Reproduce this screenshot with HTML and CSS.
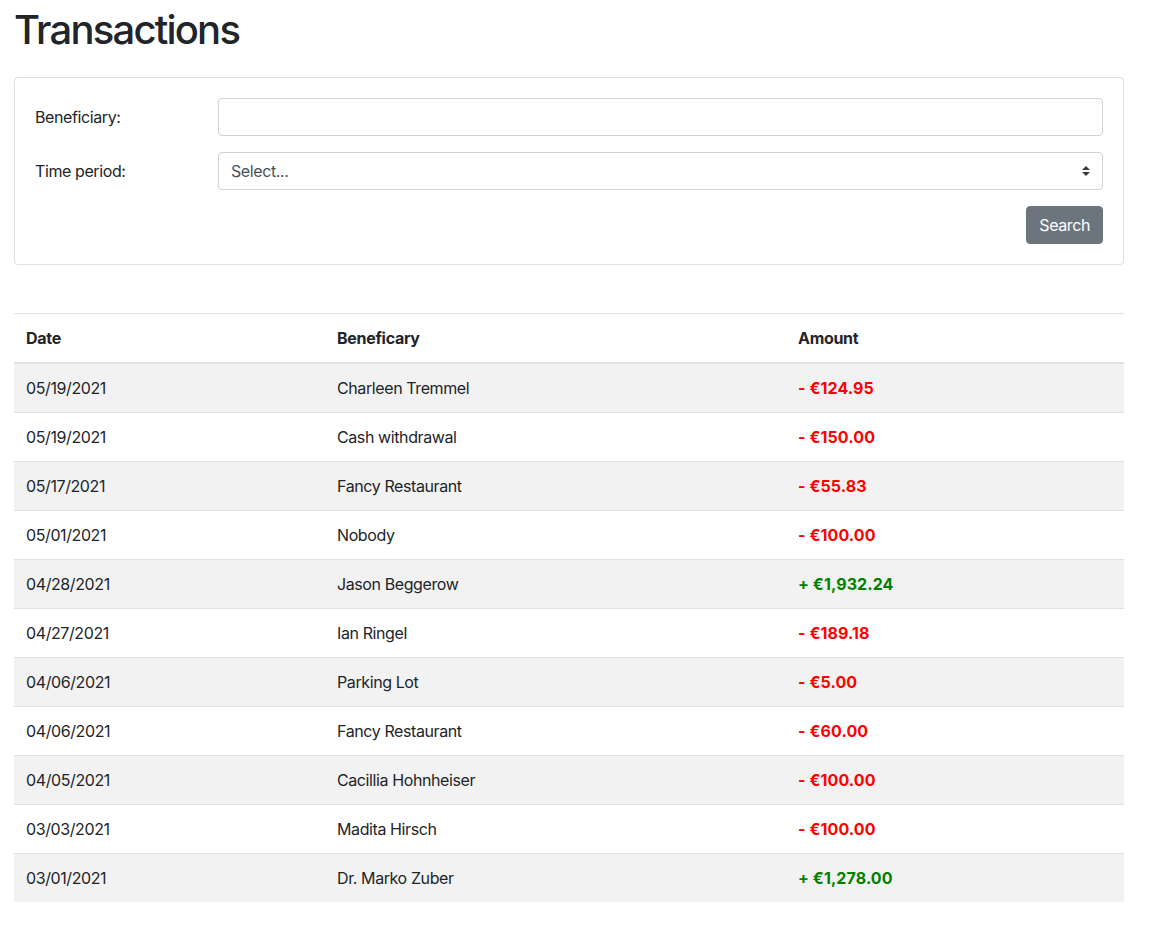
FILE: index.html
```html
<!DOCTYPE html>
<html lang="en">
<head>
<meta charset="utf-8">
<title>Transactions</title>
<link rel="stylesheet" href="styles.css">
</head>
<body>
<main class="container">
  <h1 class="title">Transactions</h1>
  <section class="card">
    <form class="filter-form">
      <div class="form-row">
        <label class="form-label" for="beneficiary">Beneficiary:</label>
        <input class="form-control" id="beneficiary" type="text">
      </div>
      <div class="form-row">
        <label class="form-label" for="period">Time period:</label>
        <div class="select-control" id="period">
          <span class="select-text">Select...</span>
          <svg class="select-arrow" width="8" height="10" viewBox="0 0 4 5"><path fill="#343a40" d="M2 0L0 2h4zm0 5L0 3h4z"/></svg>
        </div>
      </div>
      <div class="form-actions">
        <button type="button" class="btn">Search</button>
      </div>
    </form>
  </section>

  <table class="table">
    <thead>
      <tr><th class="col-date">Date</th><th class="col-name">Beneficary</th><th>Amount</th></tr>
    </thead>
    <tbody>
      <tr><td>05/19/2021</td><td>Charleen Tremmel</td><td class="neg">- €124.95</td></tr>
      <tr><td>05/19/2021</td><td>Cash withdrawal</td><td class="neg">- €150.00</td></tr>
      <tr><td>05/17/2021</td><td>Fancy Restaurant</td><td class="neg">- €55.83</td></tr>
      <tr><td>05/01/2021</td><td>Nobody</td><td class="neg">- €100.00</td></tr>
      <tr><td>04/28/2021</td><td>Jason Beggerow</td><td class="pos">+ €1,932.24</td></tr>
      <tr><td>04/27/2021</td><td>Ian Ringel</td><td class="neg">- €189.18</td></tr>
      <tr><td>04/06/2021</td><td>Parking Lot</td><td class="neg">- €5.00</td></tr>
      <tr><td>04/06/2021</td><td>Fancy Restaurant</td><td class="neg">- €60.00</td></tr>
      <tr><td>04/05/2021</td><td>Cacillia Hohnheiser</td><td class="neg">- €100.00</td></tr>
      <tr><td>03/03/2021</td><td>Madita Hirsch</td><td class="neg">- €100.00</td></tr>
      <tr><td>03/01/2021</td><td>Dr. Marko Zuber</td><td class="pos">+ €1,278.00</td></tr>
    </tbody>
  </table>
</main>
</body>
</html>
```

FILE: styles.css
```css
* { box-sizing: border-box; }
html, body { margin: 0; padding: 0; background: #fff; }
body {
  font-family: Inter, "Noto Sans", "Liberation Sans", sans-serif;
  font-size: 16px;
  line-height: 1.5;
  color: #212529;
  letter-spacing: -0.4px;
}
.container {
  width: 1110px;
  margin-left: 14px;
}
.title {
  font-size: 40px;
  font-weight: 500;
  line-height: 48px;
  margin: 6px 0 23px;
  letter-spacing: -1.8px;
}
.card {
  border: 1px solid rgba(0,0,0,0.125);
  border-radius: 4px;
  padding: 20px;
}
.filter-form { display: flex; flex-direction: column; gap: 16px; }
.form-row {
  display: grid;
  grid-template-columns: 183px 1fr;
  align-items: center;
}
.form-control, .select-control {
  height: 38px;
  border: 1px solid #ced4da;
  border-radius: 4px;
  padding: 6px 12px;
  font: inherit;
  color: #495057;
  width: 100%;
  background: #fff;
}
.select-control {
  display: flex;
  align-items: center;
  justify-content: space-between;
  padding-right: 12px;
}
.select-text { color: #495057; }
.form-actions { display: flex; justify-content: flex-end; }
.btn {
  font: inherit;
  letter-spacing: -0.4px;
  background: #6c757d;
  color: #fff;
  border: 1px solid #6c757d;
  border-radius: 4px;
  padding: 6px 12px;
  height: 38px;
  line-height: 24px;
}
.table {
  width: 100%;
  margin-top: 48px;
  border-collapse: collapse;
}
.table th, .table td {
  text-align: left;
  padding: 12px;
  border-top: 1px solid #dee2e6;
  vertical-align: top;
}
.table th { font-weight: 700; letter-spacing: -0.3px; }
.table thead th { border-bottom: 2px solid #dee2e6; }
.col-date { width: 311px; }
.col-name { width: 461px; }
.table tbody tr:nth-child(odd) { background: #f2f2f2; }
.neg, .pos { font-weight: 700; letter-spacing: 0.1px; }
.neg { color: #ff0000; }
.pos { color: #008000; }
```
